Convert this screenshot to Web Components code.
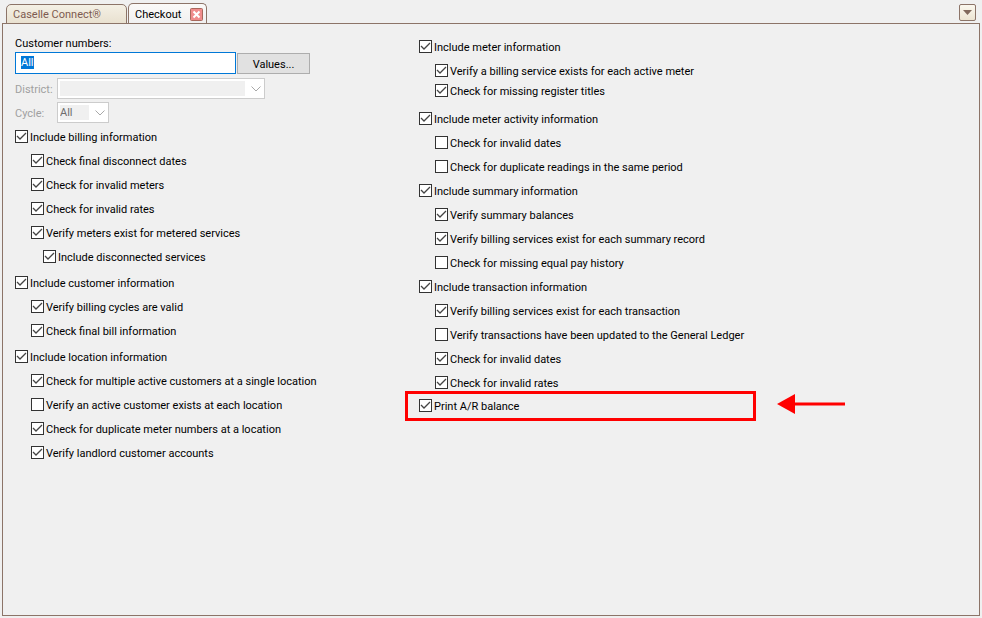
<!DOCTYPE html>
<html lang="en">
<head>
<meta charset="utf-8">
<title>Checkout</title>
<style>
    *{
        box-sizing: border-box;
    }
    body{
        margin: 0;
        min-height: 100vh;
        display: flex;
        background: #f0f0f0;
        color: #000;
        font-family: Tahoma, Roboto, sans-serif;
        font-size: 11px;
        line-height: 14px;
    }
    check-window{
        flex: 1;
    }
</style>
</head>
<body>

<check-window>
    <tab-item slot="tabs">Caselle Connect®</tab-item>
    <tab-item slot="tabs" active>Checkout</tab-item>

    <option-column>
        <customer-filter></customer-filter>
        <check-option checked>Include billing information</check-option>
        <check-option level="1" checked>Check final disconnect dates</check-option>
        <check-option level="1" checked>Check for invalid meters</check-option>
        <check-option level="1" checked>Check for invalid rates</check-option>
        <check-option level="1" checked>Verify meters exist for metered services</check-option>
        <check-option level="2" checked>Include disconnected services</check-option>
        <check-option space="6" checked>Include customer information</check-option>
        <check-option level="1" checked>Verify billing cycles are valid</check-option>
        <check-option level="1" checked>Check final bill information</check-option>
        <check-option space="6" checked>Include location information</check-option>
        <check-option level="1" checked>Check for multiple active customers at a single location</check-option>
        <check-option level="1">Verify an active customer exists at each location</check-option>
        <check-option level="1" checked>Check for duplicate meter numbers at a location</check-option>
        <check-option level="1" checked>Verify landlord customer accounts</check-option>
    </option-column>

    <option-column>
        <check-option space="0" checked>Include meter information</check-option>
        <check-option level="1" checked>Verify a billing service exists for each active meter</check-option>
        <check-option level="1" space="0" checked>Check for missing register titles</check-option>
        <check-option space="8" checked>Include meter activity information</check-option>
        <check-option level="1">Check for invalid dates</check-option>
        <check-option level="1">Check for duplicate readings in the same period</check-option>
        <check-option checked>Include summary information</check-option>
        <check-option level="1" checked>Verify summary balances</check-option>
        <check-option level="1" checked>Verify billing services exist for each summary record</check-option>
        <check-option level="1">Check for missing equal pay history</check-option>
        <check-option checked>Include transaction information</check-option>
        <check-option level="1" checked>Verify billing services exist for each transaction</check-option>
        <check-option level="1">Verify transactions have been updated to the General Ledger</check-option>
        <check-option level="1" checked>Check for invalid dates</check-option>
        <check-option level="1" checked>Check for invalid rates</check-option>
        <marked-option>
            <check-option space="0" checked>Print A/R balance</check-option>
        </marked-option>
    </option-column>
</check-window>

<script>
class CheckWindow extends HTMLElement {
    constructor(){
        super();
        this.attachShadow({mode:'open'});
    }

    getTemplate(){
        const template = document.createElement('template');
        template.innerHTML = `
            <header>
                <nav><slot name="tabs"></slot></nav>
                <button class="menu" aria-label="Open tabs">
                    <svg width="9" height="5" viewBox="0 0 9 5"><path d="M0 0H9L4.500 5Z" fill="#81695c"/></svg>
                </button>
            </header>
            <main><slot></slot></main>
            ${this.getStyles()}
        `;
        return template;
    }

    getStyles(){
        return `
        <style>
        *{
            box-sizing: border-box;
        }
        :host{
            display: flex;
            flex-direction: column;
            padding: 3px 2px 2px;
        }
        header{
            display: flex;
            justify-content: space-between;
            align-items: flex-start;
            padding: 0 4px;
        }
        nav{
            display: flex;
            align-items: flex-end;
            gap: 1px;
            height: 21px;
            margin-bottom: -1px;
        }
        .menu{
            display: flex;
            align-items: center;
            justify-content: center;
            width: 17px;
            height: 17px;
            margin-top: 1px;
            padding: 0;
            border: 1px solid #8c7468;
            border-radius: 2px;
            background: linear-gradient(#fbf8ef, #ece4d2);
        }
        main{
            flex: 1;
            display: grid;
            grid-template-columns: 404px 1fr;
            padding: 13px 12px;
            border: 1px solid #8c7468;
        }
        </style>
        `;
    }

    connectedCallback(){
        this.shadowRoot.appendChild(this.getTemplate().content.cloneNode(true));
    }
}

class TabItem extends HTMLElement {
    constructor(){
        super();
        this.attachShadow({mode:'open'});
    }

    getTemplate(){
        const active = this.hasAttribute('active');
        const close = `
            <button class="close" aria-label="Close tab">
                <svg width="13" height="13" viewBox="0 0 13 13">
                    <rect x=".5" y=".5" width="12" height="12" rx="1" fill="#f08c8c" stroke="#a8685c"/>
                    <path d="M3.500 3.500L9.500 9.500M9.500 3.500L3.500 9.500" stroke="#fff" stroke-width="2"/>
                </svg>
            </button>`;
        const template = document.createElement('template');
        template.innerHTML = `
            <button class="name"><slot></slot></button>
            ${active ? close : ''}
            ${this.getStyles()}
        `;
        return template;
    }

    getStyles(){
        return `
        <style>
        *{
            box-sizing: border-box;
        }
        :host{
            box-sizing: border-box;
            display: flex;
            align-items: center;
            justify-content: space-between;
            height: 20px;
            min-width: 121px;
            padding: 0 3px 0 6px;
            border: 1px solid #8c7468;
            border-radius: 5px 5px 0 0;
            background: linear-gradient(#f4f0e5, #e9e1d0);
            color: #7d5b50;
        }
        :host([active]){
            height: 21px;
            min-width: 79px;
            border-bottom: 0;
            background: linear-gradient(#fbfaf8, #f0f0f0);
            color: #000;
        }
        button{
            padding: 0;
            border: 0;
            background: none;
            color: inherit;
            font: inherit;
        }
        .name{
            padding-top: 2px;
        }
        .close{
            display: flex;
        }
        </style>
        `;
    }

    connectedCallback(){
        this.shadowRoot.appendChild(this.getTemplate().content.cloneNode(true));
    }
}

class OptionColumn extends HTMLElement {
    constructor(){
        super();
        this.attachShadow({mode:'open'});
    }

    connectedCallback(){
        this.shadowRoot.innerHTML = `
            <slot></slot>
            <style>
            :host{
                display: flex;
                flex-direction: column;
                min-width: 0;
            }
            </style>
        `;
    }
}

class CustomerFilter extends HTMLElement {
    constructor(){
        super();
        this.attachShadow({mode:'open'});
    }

    getTemplate(){
        const arrow = `<svg width="10" height="6" viewBox="0 0 10 6"><path d="M.5 .5L5 5L9.500 .5" fill="none" stroke="#a8a8a8"/></svg>`;
        const template = document.createElement('template');
        template.innerHTML = `
            <label for="numbers">Customer numbers:</label>
            <div class="numbers">
                <input id="numbers" type="text" value="All">
                <button>Values...</button>
            </div>
            <div class="row">
                <label for="district">District:</label>
                <div class="select wide">
                    <select id="district" disabled><option></option></select>
                    ${arrow}
                </div>
            </div>
            <div class="row">
                <label for="cycle">Cycle:</label>
                <div class="select">
                    <select id="cycle" disabled><option>All</option></select>
                    ${arrow}
                </div>
            </div>
            ${this.getStyles()}
        `;
        return template;
    }

    getStyles(){
        return `
        <style>
        *{
            box-sizing: border-box;
        }
        :host{
            display: flex;
            flex-direction: column;
            gap: 3px;
        }
        input, button, select{
            margin: 0;
            font: inherit;
        }
        :host > label{
            margin-bottom: -2px;
        }
        .numbers{
            display: flex;
            align-items: flex-end;
            gap: 1px;
            margin-bottom: 1px;
        }
        input{
            width: 221px;
            height: 22px;
            padding: 0 5px 2px;
            border: 1px solid #0078d7;
            outline: 0;
            background: #fff;
        }
        input::selection{
            background: #0078d7;
            color: #fff;
        }
        button{
            width: 73px;
            height: 21px;
            padding: 2px 0 0;
            border: 1px solid #adadad;
            background: #e1e1e1;
            color: #000;
        }
        .row{
            display: grid;
            grid-template-columns: 42px 1fr;
            align-items: center;
            color: #a0a0a0;
        }
        .row label{
            padding-top: 2px;
        }
        .select{
            display: grid;
            align-items: center;
            width: 52px;
        }
        .wide{
            width: 208px;
        }
        .select > *{
            grid-area: 1 / 1;
        }
        select{
            appearance: none;
            width: 100%;
            height: 21px;
            padding: 2px 19px 2px 2px;
            border: 1px solid #ccc;
            border-radius: 0;
            background: linear-gradient(#f0f0f0, #f0f0f0) content-box, #fff;
            color: #6d6d6d;
            opacity: 1;
        }
        svg{
            justify-self: end;
            margin-right: 4px;
        }
        </style>
        `;
    }

    connectedCallback(){
        this.shadowRoot.appendChild(this.getTemplate().content.cloneNode(true));
        this.input = this.shadowRoot.querySelector('#numbers');
        this.input.focus();
        this.input.select();
    }
}

class CheckOption extends HTMLElement {
    constructor(){
        super();
        this.attachShadow({mode:'open'});
    }

    getTemplate(){
        const template = document.createElement('template');
        template.innerHTML = `
            <label>
                <span class="box">
                    <input type="checkbox" ${this.hasAttribute('checked') ? 'checked' : ''}>
                    <svg width="13" height="13" viewBox="0 0 13 13"><path d="M2 6L5 9L11 3" fill="none" stroke="#444" stroke-width="1.300"/></svg>
                </span>
                <span class="text"><slot></slot></span>
            </label>
            ${this.getStyles()}
        `;
        return template;
    }

    getStyles(){
        return `
        <style>
        *{
            box-sizing: border-box;
        }
        :host{
            display: flex;
            margin-top: 4px;
        }
        :host([space="0"]){ margin-top: 0; }
        :host([space="6"]){ margin-top: 6px; }
        :host([space="8"]){ margin-top: 8px; }
        :host([level="1"]){ padding-left: 16px; }
        :host([level="2"]){ padding-left: 28px; }
        label{
            display: flex;
            align-items: center;
            gap: 2px;
            height: 20px;
            white-space: nowrap;
        }
        .text{
            padding-top: 2px;
        }
        .box{
            display: grid;
            margin-bottom: 1px;
        }
        .box > *{
            grid-area: 1 / 1;
        }
        input{
            appearance: none;
            width: 13px;
            height: 13px;
            margin: 0;
            border: 1px solid #333;
            background: #fff;
        }
        svg{
            visibility: hidden;
            pointer-events: none;
        }
        input:checked + svg{
            visibility: visible;
        }
        </style>
        `;
    }

    connectedCallback(){
        this.shadowRoot.appendChild(this.getTemplate().content.cloneNode(true));
    }
}

/* red frame with an arrow pointing at it */
class MarkedOption extends HTMLElement {
    constructor(){
        super();
        this.attachShadow({mode:'open'});
    }

    getTemplate(){
        const template = document.createElement('template');
        template.innerHTML = `
            <div class="frame"><slot></slot></div>
            <svg width="68" height="22" viewBox="0 0 68 22">
                <path d="M0 11L18 1V21Z" fill="#f00"/>
                <path d="M17 11H68" stroke="#f00" stroke-width="3"/>
            </svg>
            ${this.getStyles()}
        `;
        return template;
    }

    getStyles(){
        return `
        <style>
        *{
            box-sizing: border-box;
        }
        :host{
            display: flex;
            align-items: center;
            gap: 21px;
            margin: -2px 0 0 -14px;
        }
        .frame{
            width: 351px;
            padding: 2px 11px;
            border: 3px solid #f00;
        }
        svg{
            margin-bottom: 4px;
        }
        </style>
        `;
    }

    connectedCallback(){
        this.shadowRoot.appendChild(this.getTemplate().content.cloneNode(true));
    }
}

customElements.define('check-window', CheckWindow);
customElements.define('tab-item', TabItem);
customElements.define('option-column', OptionColumn);
customElements.define('customer-filter', CustomerFilter);
customElements.define('check-option', CheckOption);
customElements.define('marked-option', MarkedOption);
</script>
</body>
</html>
